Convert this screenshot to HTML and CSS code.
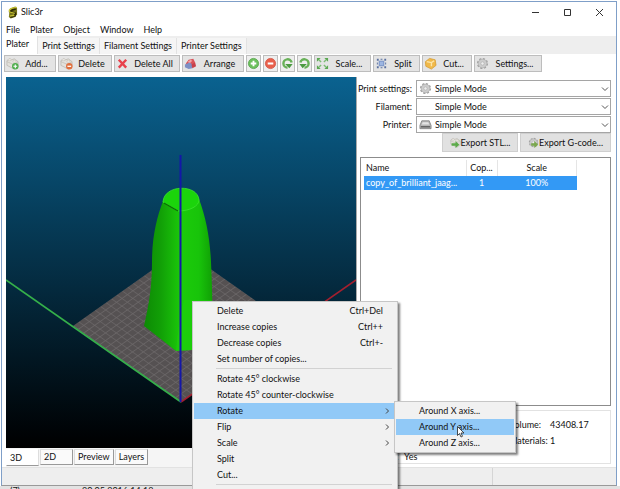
FILE: index.html
```html
<!DOCTYPE html>
<html lang="en">
<head>
    <meta charset="UTF-8">
    <meta name="viewport" content="width=device-width, initial-scale=1.0">
    <title>Slic3r</title>
    <link rel="stylesheet" href="styles.css">
</head>
<body>
    <!-- shared icons -->
    <svg class="defs" aria-hidden="true">
        <symbol id="brick" viewBox="0 0 14 14">
            <path d="M1 4l3-2 2 1 3-1 4 3v5l-4 3-8-4z" fill="#e3e1dc" stroke="#b4b0a8" stroke-width=".7"/>
            <path d="M1 5l7 3 5-3M8 8v5" fill="none" stroke="#bdb9b2" stroke-width=".7"/>
            <ellipse cx="4" cy="3" rx="1.8" ry="1" fill="#f3f1ed" stroke="#b4b0a8" stroke-width=".5"/>
            <ellipse cx="9" cy="4.5" rx="1.8" ry="1" fill="#f3f1ed" stroke="#b4b0a8" stroke-width=".5"/>
        </symbol>
        <symbol id="gear" viewBox="0 0 14 14">
            <circle cx="7" cy="7" r="5" fill="#c9c9c9" stroke="#a2a2a2" stroke-width="2" stroke-dasharray="2.2 1.7"/>
            <circle cx="7" cy="7" r="4.6" fill="#cdcdcd" stroke="#b0b0b0" stroke-width=".6"/>
            <circle cx="7" cy="7" r="1.8" fill="#eee" stroke="#a5a5a5" stroke-width=".6"/>
        </symbol>
        <symbol id="chevron" viewBox="0 0 8 8">
            <path d="M1 2.5l3 3 3-3" fill="none" stroke="#555" stroke-width="1"/>
        </symbol>
        <symbol id="more" viewBox="0 0 8 8">
            <path d="M3 1.5L5.500 4 3 6.5" fill="none" stroke="#444" stroke-width="1"/>
        </symbol>
    </svg>

    <div class="window">
        <header class="titlebar">
            <svg class="logo" viewBox="0 0 12 14">
                <path d="M3 3l6-2.500L11 2v7l-2 3-5 1.500L2 12z" fill="#77741a"/>
                <path d="M9.500 3L5 4.200 3.500 6 9 8l-.5 2.500L3.500 12" fill="none" stroke="#2c2a06" stroke-width="2.2"/>
                <path d="M10.500 1.500L5 2.500 2.500 4.500l.5 2 5.500 1.500M3 11l5-1" fill="none" stroke="#c6c230" stroke-width="1.4"/>
            </svg>
            <h1>Slic3r</h1>
            <div class="window-buttons">
                <button type="button" aria-label="Minimize"><svg viewBox="0 0 9 9"><path d="M1 4.500h7" stroke="#333" fill="none"/></svg></button>
                <button type="button" aria-label="Maximize"><svg viewBox="0 0 9 9"><path d="M1.500 1.500h6v6h-6z" stroke="#333" fill="none"/></svg></button>
                <button type="button" aria-label="Close"><svg viewBox="0 0 9 9"><path d="M1 1l7 7M8 1L1 8" stroke="#333" fill="none"/></svg></button>
            </div>
        </header>

        <nav class="menubar">
            <button type="button">File</button>
            <button type="button">Plater</button>
            <button type="button">Object</button>
            <button type="button">Window</button>
            <button type="button">Help</button>
        </nav>

        <div class="tabs" role="tablist">
            <button type="button" role="tab" class="active" aria-selected="true">Plater</button>
            <button type="button" role="tab">Print Settings</button>
            <button type="button" role="tab">Filament Settings</button>
            <button type="button" role="tab">Printer Settings</button>
        </div>

        <div class="toolbar">
            <button type="button" class="w-52">
                <svg viewBox="0 0 14 14"><use href="#brick"/><circle cx="10" cy="10" r="3.5" fill="#4fae4c"/><path d="M8 10h4M10 8v4" stroke="#fff" stroke-width="1.2"/></svg>
                <span>Add...</span>
            </button>
            <button type="button" class="w-54">
                <svg viewBox="0 0 14 14"><use href="#brick"/><circle cx="10" cy="10" r="3.5" fill="#e0703e"/><path d="M8 10h4" stroke="#fff" stroke-width="1.4"/></svg>
                <span>Delete</span>
            </button>
            <button type="button" class="w-66">
                <svg viewBox="0 0 14 14"><path d="M3 3l8 8.500M11 3l-8 8.500" stroke="#e8414c" stroke-width="2.6"/></svg>
                <span>Delete All</span>
            </button>
            <button type="button" class="w-62">
                <svg viewBox="0 0 14 14"><path d="M2 7l3-4 5-1 2 4-2 4H4z" fill="#d9535a"/><path d="M4 5l3-2 2 1-3 3z" fill="#f2a4a6"/><path d="M1 8l5-2 3 2v4l-4 1-4-2z" fill="#7d8fc4"/><path d="M8 8l4-2 1 4-4 2z" fill="#c8414a"/></svg>
                <span>Arrange</span>
            </button>
            <button type="button" class="icon-only" aria-label="More copies">
                <svg viewBox="0 0 14 14"><circle cx="7" cy="7" r="5.5" fill="#6cbf5c" stroke="#4ea043" stroke-width=".8"/><path d="M4 7h6M7 4v6" stroke="#fff" stroke-width="2"/></svg>
            </button>
            <button type="button" class="icon-only" aria-label="Fewer copies">
                <svg viewBox="0 0 14 14"><circle cx="7" cy="7" r="5.5" fill="#e8604c" stroke="#d34b3c" stroke-width=".8"/><path d="M4 7h6" stroke="#fff" stroke-width="2.2"/></svg>
            </button>
            <button type="button" class="icon-only" aria-label="Rotate counter-clockwise">
                <svg viewBox="0 0 14 14"><path d="M7 11.500A4.500 4.500 0 1 1 11.500 6" fill="none" stroke="#68b158" stroke-width="2.6"/><path d="M4.500 7.500h8L9 12z" fill="#4c9a42"/></svg>
            </button>
            <button type="button" class="icon-only" aria-label="Rotate clockwise">
                <svg viewBox="0 0 14 14"><path d="M7 11.500A4.500 4.500 0 1 0 2.500 6" fill="none" stroke="#68b158" stroke-width="2.6"/><path d="M9.500 7.500h-8L5 12z" fill="#4c9a42"/></svg>
            </button>
            <button type="button" class="w-57">
                <svg viewBox="0 0 14 14"><path d="M1 1h4L1 5zM13 1v4L9 1zM1 13V9l4 4zM13 13H9l4-4z" fill="#5aa851"/><path d="M3 3l2.500 2.500M11 3L8.500 5.500M3 11l2.500-2.500M11 11L8.500 8.500" stroke="#7dbc74" stroke-width="1.5"/></svg>
                <span>Scale...</span>
            </button>
            <button type="button" class="w-47">
                <svg viewBox="0 0 14 14"><path d="M4.500 4.500h5v5h-5z" fill="#9db6e2" stroke="#6f8cc4"/><path d="M2 2h2v2H2zM10 2h2v2h-2zM2 10h2v2H2zM10 10h2v2h-2zM6 2h2v1H6zM6 11h2v1H6zM2 6h1v2H2zM11 6h1v2h-1z" fill="#5a70a0"/></svg>
                <span>Split</span>
            </button>
            <button type="button" class="w-50">
                <svg viewBox="0 0 14 14"><path d="M1.500 5L6 1.500 12 3l1 6-5 4-6-3z" fill="#f0b94a" stroke="#d59a2d" stroke-width=".8"/><path d="M3 5l5 1 3-2M8 6v4" fill="none" stroke="#fce6ab" stroke-width="1.5"/></svg>
                <span>Cut...</span>
            </button>
            <button type="button" class="w-68">
                <svg><use href="#gear"/></svg>
                <span>Settings...</span>
            </button>
        </div>

        <main class="plater">
            <section class="view">
                <svg class="scene" viewBox="6 77 350 371" preserveAspectRatio="xMidYMid slice" role="img" aria-label="3D view of the print bed">
                    <defs>
                        <linearGradient id="sky" x1="0" y1="0" x2="0" y2="1">
                            <stop offset="0" stop-color="#0a6290"/>
                            <stop offset=".95" stop-color="#000407"/>
                            <stop offset="1" stop-color="#000"/>
                        </linearGradient>
                        <linearGradient id="body" x1="0" y1="0" x2="1" y2="0">
                            <stop offset="0" stop-color="#0d8a05"/>
                            <stop offset=".25" stop-color="#12a007"/>
                            <stop offset=".55" stop-color="#1bcb0a"/>
                            <stop offset=".8" stop-color="#18c40a"/>
                            <stop offset="1" stop-color="#10a005"/>
                        </linearGradient>
                        <pattern id="grid" width="1" height="1" patternUnits="userSpaceOnUse">
                            <rect width="1" height="1" fill="#555152"/>
                            <path d="M0 0h1M0 0v1" stroke="#6c6869" stroke-width=".24"/>
                        </pattern>
                    </defs>
                    <rect x="6" y="77" width="350" height="371" fill="url(#sky)"/>
                    <rect width="20" height="20" transform="matrix(-5.4 -3.8 5.45 -3.85 181 402)" fill="url(#grid)"/>
                    <path d="M6 280L181 402" stroke="#35b04a" stroke-width="1.6"/>
                    <path d="M181 402L356 280" stroke="#a3202f" stroke-width="1.6"/>
                    <path d="M163 201C157 217 152 236 152 262C152 290 148 308 144 326L176 351L192 350L212 340C213 310 212 285 211 262C210 238 206 218 199 199Z" fill="url(#body)"/>
                    <path d="M176 351C178 330 180 315 184 300L212 300V345L192 350Z" fill="#1fd40c" opacity=".5"/>
                    <path d="M163 202C164 184 198 184 199 200C199 206 190 211 178 211Z" fill="#1bd40b" stroke="#3ee32d" stroke-width=".8"/>
                    <path d="M164 203L178 211" stroke="#0a6d04" stroke-width="1.2"/>
                    <path d="M180.500 155V402" stroke="#1417a8" stroke-width="2"/>
                </svg>
                <div class="view-tabs" role="tablist">
                    <button type="button" role="tab" class="active" aria-selected="true">3D</button>
                    <button type="button" role="tab">2D</button>
                    <button type="button" role="tab">Preview</button>
                    <button type="button" role="tab">Layers</button>
                </div>
            </section>

            <aside class="side">
                <div class="presets">
                    <label for="print">Print settings:</label>
                    <div class="choice">
                        <select id="print"><option>Simple Mode</option></select>
                        <svg class="preset-icon"><use href="#gear"/></svg>
                        <svg class="arrow"><use href="#chevron"/></svg>
                    </div>
                    <label for="filament">Filament:</label>
                    <div class="choice">
                        <select id="filament"><option>Simple Mode</option></select>
                        <svg class="arrow"><use href="#chevron"/></svg>
                    </div>
                    <label for="printer">Printer:</label>
                    <div class="choice">
                        <select id="printer"><option>Simple Mode</option></select>
                        <svg class="preset-icon" viewBox="0 0 14 14"><path d="M3 3h8l2 5v3.500H1V8z" fill="#b5b5b5" stroke="#777" stroke-width=".8"/><path d="M4 4.500h6l1 2.500H3z" fill="#e4e4e4"/><path d="M2 9.500h10" stroke="#555" stroke-width="1.4"/></svg>
                        <svg class="arrow"><use href="#chevron"/></svg>
                    </div>
                </div>

                <div class="exports">
                    <button type="button" class="stl">
                        <svg viewBox="0 0 14 14"><use href="#brick"/><path d="M2 8h5V5l5 5-5 4v-3H2z" fill="#5cab4a"/></svg>
                        Export STL...
                    </button>
                    <button type="button" class="gcode">
                        <svg viewBox="0 0 14 14"><use href="#gear"/><path d="M4 8h4V5l5 5-5 4v-3H4z" fill="#7aa84e"/></svg>
                        Export G-code...
                    </button>
                </div>

                <div class="objects">
                    <table>
                        <thead>
                            <tr><th class="name">Name</th><th class="copies">Cop...</th><th class="scale">Scale</th></tr>
                        </thead>
                        <tbody>
                            <tr><td class="name">copy_of_brilliant_jaag...</td><td class="copies">1</td><td class="scale">100%</td></tr>
                        </tbody>
                    </table>
                </div>

                <dl class="info">
                    <dt class="second">Volume:</dt><dd>43408.17</dd>
                    <dt class="second">Materials:</dt><dd>1</dd>
                    <dt>Manifold:</dt><dd>Yes</dd>
                </dl>
            </aside>
        </main>

        <footer class="statusbar"><span></span><span></span></footer>
    </div>

    <div class="behind">
        <span>(7)</span><span>20.05.2016 14:18</span><span>3D N</span>
    </div>

    <div class="menu context-menu" role="menu">
        <button type="button" role="menuitem">Delete<kbd>Ctrl+Del</kbd></button>
        <button type="button" role="menuitem">Increase copies<kbd>Ctrl++</kbd></button>
        <button type="button" role="menuitem">Decrease copies<kbd>Ctrl+-</kbd></button>
        <button type="button" role="menuitem">Set number of copies...</button>
        <hr>
        <button type="button" role="menuitem">Rotate 45° clockwise</button>
        <button type="button" role="menuitem">Rotate 45° counter-clockwise</button>
        <button type="button" role="menuitem" class="current">Rotate<svg><use href="#more"/></svg></button>
        <button type="button" role="menuitem">Flip<svg><use href="#more"/></svg></button>
        <button type="button" role="menuitem">Scale<svg><use href="#more"/></svg></button>
        <button type="button" role="menuitem">Split</button>
        <button type="button" role="menuitem">Cut...</button>
        <hr>
    </div>

    <div class="menu submenu" role="menu">
        <button type="button" role="menuitem">Around X axis...</button>
        <button type="button" role="menuitem" class="current">Around Y axis...</button>
        <button type="button" role="menuitem">Around Z axis...</button>
    </div>

    <svg class="cursor" viewBox="0 0 8 12"><path d="M.5.5v9l2-2 1.500 3.500 1.500-.7L4 7h3z" fill="#fff" stroke="#222" stroke-width=".8"/></svg>
</body>
</html>
```
FILE: styles.css
```css
* {
    box-sizing: border-box;
}

body {
    margin: 0;
    height: 100vh;
    display: flex;
    flex-direction: column;
    overflow: hidden;
    background: #fff;
    color: #111;
    font-family: Lato, "Open Sans", sans-serif;
    font-size: 9px;
    line-height: 12px;
}

button,
select {
    font: inherit;
    color: inherit;
    margin: 0;
    padding: 0;
    border: 0;
    border-radius: 0;
    background: none;
}

svg {
    display: block;
    flex: none;
}

.defs {
    position: absolute;
    width: 0;
    height: 0;
}

.window {
    flex: 1;
    min-height: 0;
    display: flex;
    flex-direction: column;
    margin: 1px 3px 0 1px;
    border: 1px solid #7f9fc8;
    border-bottom-color: #999;
    background: #fff;
}

/* title and menus */
.titlebar {
    display: flex;
    align-items: center;
    height: 20px;
    padding-left: 5px;
}

.logo {
    width: 11px;
    height: 13px;
}

.titlebar h1 {
    flex: 1;
    margin: 0 0 0 3px;
    font-size: 9px;
    font-weight: normal;
}

.window-buttons {
    display: flex;
    padding-right: 1px;
}

.window-buttons button {
    width: 32px;
    padding: 0 12px;
}

.window-buttons svg {
    width: 9px;
    height: 9px;
}

.menubar {
    display: flex;
    gap: 10px;
    height: 14px;
    padding: 2px 0 0 4px;
}

.tabs {
    display: flex;
    align-items: flex-end;
    height: 18px;
    background: #eee;
}

.tabs button {
    height: 16px;
    padding: 0 4px;
    background: #f5f5f5;
    border-right: 1px solid #e2e2e2;
}

.tabs .active {
    height: 18px;
    padding: 0 8px 2px 4px;
    background: #fff;
}

/* toolbar */
.toolbar {
    display: flex;
    gap: 2px;
    padding: 1px 2px 5px;
}

.toolbar button {
    display: flex;
    align-items: center;
    height: 17px;
    padding: 0 1px;
    border: 1px solid #bdbdbd;
    background: #e4e4e4;
}

.toolbar svg {
    width: 13px;
    height: 13px;
}

.toolbar span {
    flex: 1;
    text-align: center;
}

.toolbar .icon-only {
    width: 15px;
    padding: 0;
    background: #eee;
}

.w-47 { width: 47px; }
.w-50 { width: 50px; }
.w-52 { width: 52px; }
.w-54 { width: 54px; }
.w-57 { width: 57px; }
.w-62 { width: 62px; }
.w-66 { width: 66px; }
.w-68 { width: 68px; }

/* plater */
.plater {
    flex: 1;
    min-height: 0;
    display: flex;
}

.view {
    flex: 1;
    min-width: 0;
    display: flex;
    flex-direction: column;
    padding-left: 4px;
}

.scene {
    flex: 1;
    min-height: 0;
    width: 100%;
}

.view-tabs {
    display: flex;
    gap: 1px;
    height: 19px;
    padding-top: 1px;
    background: #f5f5f5;
}

.view-tabs button {
    height: 16px;
    padding: 0 3px;
    border: 1px solid #999;
    border-top-color: #ddd;
    border-left-color: #ddd;
    text-align: left;
    min-width: 33px;
    background: #fafafa;
}

.view-tabs .active {
    height: 17px;
    border-color: #fff #ddd #999 #fff;
    background: #fff;
}

.side {
    width: 260px;
    display: flex;
    flex-direction: column;
    padding: 3px 5px 0 3px;
    border-left: 1px solid #aaa;
}

.presets {
    display: grid;
    grid-template-columns: 52px 1fr;
    gap: 1px 4px;
    align-items: center;
    justify-items: end;
    white-space: nowrap;
}

.choice {
    position: relative;
    width: 100%;
}

.choice select {
    display: block;
    width: 100%;
    height: 17px;
    padding: 0 18px;
    border: 1px solid #a5a5a5;
    appearance: none;
    background: #fff;
}

.preset-icon {
    position: absolute;
    left: 3px;
    top: 2px;
    width: 13px;
    height: 13px;
}

.arrow {
    position: absolute;
    right: 2px;
    top: 5px;
    width: 8px;
    height: 8px;
}

.exports {
    display: flex;
    justify-content: flex-end;
    gap: 2px;
}

.exports button {
    display: flex;
    align-items: center;
    justify-content: center;
    height: 19px;
    border: 1px solid #cfcfcf;
    background: #e1e1e1;
}

.exports svg {
    width: 11px;
    height: 11px;
}

.stl {
    width: 76px;
}

.gcode {
    width: 91px;
}

.objects {
    flex: 1;
    min-height: 0;
    margin-top: 5px;
    padding: 2px 3px;
    border: 1px solid #8c8c8c;
}

.objects table {
    width: 213px;
    table-layout: fixed;
    border-collapse: collapse;
}

.objects th,
.objects td {
    height: 14px;
    padding: 0;
    font-weight: normal;
    text-align: center;
    white-space: nowrap;
}

.objects th {
    height: 16px;
    border-right: 1px solid #e5e5e5;
}

.objects .name {
    width: 102px;
    padding-left: 2px;
    text-align: left;
}

.objects .copies {
    width: 31px;
}

.objects tbody {
    background: #3399f5;
    color: #fff;
}

.info {
    display: grid;
    grid-template-columns: 43px 105px 41px 1fr;
    align-content: start;
    row-gap: 4px;
    height: 54px;
    margin: 4px 0 3px;
    padding: 8px 0 0;
    border: 1px solid #e2e2e2;
}

.info dt {
    grid-column: 1;
}

.info .second {
    grid-column: 3;
}

.info dd {
    margin: 0;
}

.statusbar {
    display: flex;
    height: 18px;
    background: #eee;
    border-top: 1px solid #e2e2e2;
}

.statusbar span {
    flex: 1;
}

.statusbar span:first-child {
    flex: 4;
    border-right: 1px solid #d5d5d5;
}

/* file list under the window */
.behind {
    display: flex;
    gap: 62px;
    height: 3px;
    padding-left: 10px;
    overflow: hidden;
    background: #e2e2e2;
    line-height: 10px;
}

/* popup menus */
.menu {
    position: absolute;
    padding: 1px;
    border: 1px solid #c6c6c6;
    background: #f1f1f1;
    box-shadow: 2px 2px 2px rgba(0, 0, 0, 0.5);
}

.menu button {
    display: flex;
    align-items: center;
    justify-content: space-between;
    width: 100%;
    height: 16px;
    padding: 0 11px 0 23px;
}

.menu .current {
    background: #91c9f7;
}

.menu kbd {
    font: inherit;
}

.menu svg {
    width: 8px;
    height: 8px;
    margin-right: -8px;
}

.menu hr {
    height: 1px;
    margin: 1px 2px 2px 22px;
    border: 0;
    background: #d2d2d2;
}

.context-menu {
    left: 192px;
    top: 301px;
    width: 206px;
    padding-right: 3px;
    padding-bottom: 10px;
}

.submenu {
    left: 394px;
    top: 401px;
    width: 122px;
}

.cursor {
    position: absolute;
    left: 457px;
    top: 426px;
    width: 8px;
    height: 12px;
}
```
